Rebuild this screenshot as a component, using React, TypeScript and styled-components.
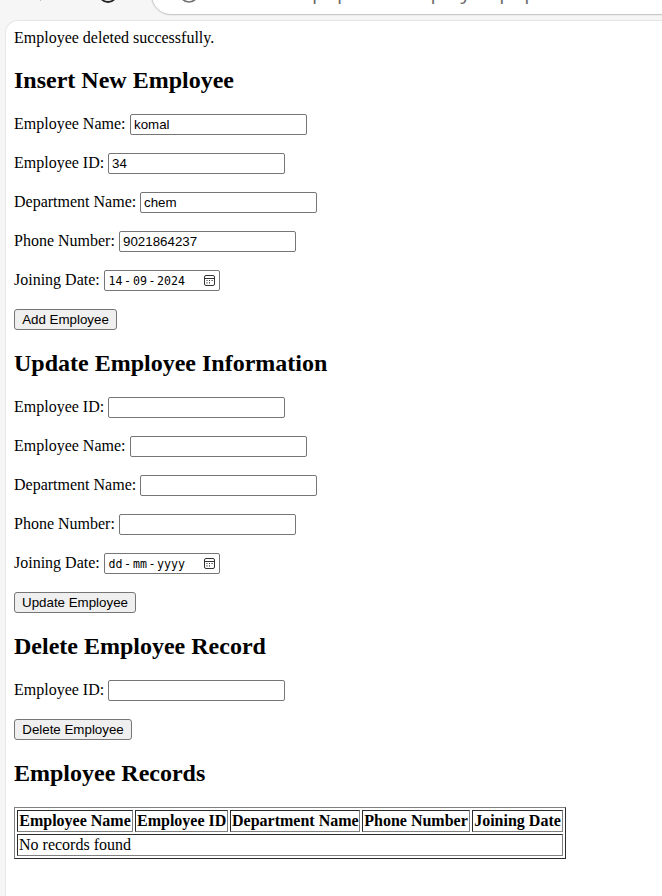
import React from "react";
import styled, { createGlobalStyle } from "styled-components";

const GlobalStyle = createGlobalStyle`
  * { box-sizing: border-box; }
  body { margin: 0; background: #f6f6f6; color: #000; font: 16px/18px "Liberation Serif", "Times New Roman", serif; overflow: hidden; }
`;
const Window = styled.div`
  height: 896px;
  display: flex;
  flex-direction: column;
  overflow: hidden;
`;
const Chrome = styled.header`
  height: 20px;
  flex: none;
  display: flex;
  align-items: flex-start;
  overflow: hidden;
`;
const NavIcons = styled.svg`
  width: 151px;
  height: 15px;
  flex: none;
`;
const AddressBar = styled.div`
  flex: 1;
  height: 40px;
  margin-top: -25px;
  margin-right: -20px;
  border: 1px solid #c8c8c8;
  border-radius: 24px 0 0 24px;
  box-shadow: 0 0 0 1px #ececec;
  background: #fff;
  display: flex;
`;
const SiteIcon = styled.svg`
  width: 20px;
  height: 20px;
  flex: none;
  margin: 8px 0 0 27px;
`;
const Url = styled.div`
  display: flex;
  margin: 3px 0 0 14px;
  font: 20.5px/24px "Open Sans", sans-serif;
  color: #6b6b6b;
  white-space: nowrap;
`;
const UrlPart = styled.span<{ $w: number; $end?: boolean }>`
  width: ${(p) => p.$w}px;
  flex: none;
  text-align: ${(p) => (p.$end ? "right" : "left")};
`;
const Page = styled.main`
  flex: 1;
  margin-left: 5px;
  margin-right: -20px;
  padding: 8px;
  background: #fff;
  border: 1px solid #e6e6e6;
  border-bottom: 0;
  border-radius: 13px 0 0 0;
`;
const Message = styled.div`
  height: 18px;
`;
const Heading = styled.h2`
  margin: 20px 0;
  font-size: 24px;
  line-height: 27px;
  font-weight: bold;
  height: 27px;
`;
const Form = styled.form`
  display: flex;
  flex-direction: column;
  align-items: flex-start;
  gap: 18px;
`;
const Row = styled.label`
  display: flex;
  align-items: center;
  height: 21px;
`;
const Label = styled.span<{ $w: number }>`
  width: ${(p) => p.$w}px;
  padding-bottom: 2px;
  white-space: nowrap;
`;
const TextInput = styled.input`
  width: 177px;
  height: 21px;
  padding: 1px 3px;
  border: 1px solid #767676;
  border-radius: 2px;
  background: #fff;
  color: #000;
  font: 13.333px "Liberation Sans", Arial, sans-serif;
`;
const DateInput = styled.span`
  width: 116px;
  height: 21px;
  padding: 0 3px;
  border: 1px solid #767676;
  border-radius: 2px;
  display: flex;
  align-items: center;
  justify-content: space-between;
`;
const DateParts = styled.span`
  display: flex;
  padding-top: 1px;
  font: 11.6px/18px "DejaVu Sans Mono", monospace;
`;
const DatePart = styled.span<{ $w: number }>`
  width: ${(p) => p.$w}px;
  display: flex;
  justify-content: center;
`;
const Button = styled.button<{ $w: number }>`
  width: ${(p) => p.$w}px;
  height: 21px;
  padding: 0;
  border: 1px solid #767676;
  border-radius: 3px;
  background: #efefef;
  color: #000;
  font: 13.333px "Liberation Sans", Arial, sans-serif;
  white-space: nowrap;
`;
const Table = styled.table`
  width: 552px;
  table-layout: fixed;
  border: 1px solid;
  border-color: #808080 #2b2b2b #2b2b2b #808080;
  border-spacing: 2px;
`;
const HeadCell = styled.th`
  height: 22px;
  padding: 1px;
  border: 1px solid;
  border-color: #2b2b2b #808080 #808080 #2b2b2b;
  white-space: nowrap;
  line-height: 18px;
`;
const Cell = styled.td`
  height: 22px;
  padding: 1px;
  border: 1px solid;
  border-color: #2b2b2b #808080 #808080 #2b2b2b;
  line-height: 18px;
`;

function CalendarIcon() {
  return (
    <svg width="13" height="13" viewBox="0 0 13 13" fill="none" stroke="#333">
      <rect x="1.5" y="1.5" width="10" height="10" rx="1.5" />
      <path d="M1.5 4.5h10" />
      <path d="M6 6.5h1M8.5 6.5h1.2M3.5 6.5h1M3.5 8.8h1M6 8.8h1" strokeWidth="1.2" />
    </svg>
  );
}

function Field({ label, width, value = "" }: { label: string; width: number; value?: string }) {
  return (
    <Row>
      <Label $w={width}>{label}</Label>
      <TextInput defaultValue={value} />
    </Row>
  );
}

function DateField({ parts }: { parts: [string, string, string] }) {
  return (
    <Row>
      <Label $w={90}>Joining Date:</Label>
      <DateInput>
        <DateParts>
          <DatePart $w={15}>{parts[0]}</DatePart>
          <DatePart $w={9}>-</DatePart>
          <DatePart $w={16}>{parts[1]}</DatePart>
          <DatePart $w={8}>-</DatePart>
          <DatePart $w={30}>{parts[2]}</DatePart>
        </DateParts>
        <CalendarIcon />
      </DateInput>
    </Row>
  );
}

const columns = [
  { title: "Employee Name", width: 116 },
  { title: "Employee ID", width: 93 },
  { title: "Department Name", width: 130 },
  { title: "Phone Number", width: 108 },
  { title: "Joining Date", width: 91 },
];

export default function App() {
  return (
    <Window>
      <GlobalStyle />
      <Chrome>
        <NavIcons viewBox="0 0 151 15" fill="none">
          <circle cx="108" cy="-7" r="9" stroke="#222" strokeWidth="1.8" />
          <path d="M38-3l3 3" stroke="#333" strokeWidth="1.6" />
        </NavIcons>
        <AddressBar>
          <SiteIcon viewBox="0 0 20 20" fill="none">
            <circle cx="10" cy="9" r="9" stroke="#707070" strokeWidth="1.7" />
          </SiteIcon>
          <Url>
            <UrlPart $w={89} $end>localhost</UrlPart>
            <UrlPart $w={10} $end>/</UrlPart>
            <UrlPart $w={76}>phpdb</UrlPart>
            <UrlPart $w={12} $end>/</UrlPart>
            <UrlPart $w={140}>employee.php</UrlPart>
          </Url>
        </AddressBar>
      </Chrome>
      <Page>
        <Message>Employee deleted successfully.</Message>
        <Heading>Insert New Employee</Heading>
        <Form>
          <Field label="Employee Name:" width={116} value="komal" />
          <Field label="Employee ID:" width={94} value="34" />
          <Field label="Department Name:" width={126} value="chem" />
          <Field label="Phone Number:" width={105} value="9021864237" />
          <DateField parts={["14", "09", "2024"]} />
          <Button type="button" $w={103}>Add Employee</Button>
        </Form>
        <Heading>Update Employee Information</Heading>
        <Form>
          <Field label="Employee ID:" width={94} />
          <Field label="Employee Name:" width={116} />
          <Field label="Department Name:" width={126} />
          <Field label="Phone Number:" width={105} />
          <DateField parts={["dd", "mm", "yyyy"]} />
          <Button type="button" $w={122}>Update Employee</Button>
        </Form>
        <Heading>Delete Employee Record</Heading>
        <Form>
          <Field label="Employee ID:" width={94} />
          <Button type="button" $w={118}>Delete Employee</Button>
        </Form>
        <Heading>Employee Records</Heading>
        <Table>
          <colgroup>
            {columns.map((c) => (
              <col key={c.title} width={c.width} />
            ))}
          </colgroup>
          <thead>
            <tr>
              {columns.map((c) => (
                <HeadCell key={c.title}>{c.title}</HeadCell>
              ))}
            </tr>
          </thead>
          <tbody>
            <tr>
              <Cell colSpan={5}>No records found</Cell>
            </tr>
          </tbody>
        </Table>
      </Page>
    </Window>
  );
}
